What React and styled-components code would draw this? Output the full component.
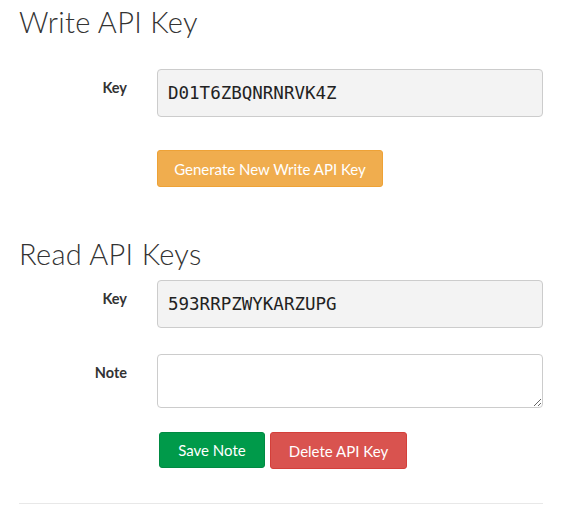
import React from 'react';
import styled, { createGlobalStyle } from 'styled-components';

const Global = createGlobalStyle`
  body {
    margin: 0;
    background: #fff;
    font-family: Lato, "Open Sans", sans-serif;
    color: #333;
  }
`;

const Page = styled.div`
  padding: 0 41px 0 19px;
  width: 525px;
`;

const Heading = styled.h2`
  font-family: Lato, sans-serif;
  font-weight: 300;
  font-size: 29px;
  line-height: 32px;
  margin: ${p => p.$top}px 0 ${p => p.$bottom}px 0;
  color: #333;
  letter-spacing: 0.3px;
`;

const Row = styled.div`
  display: grid;
  grid-template-columns: 108px 386px;
  column-gap: 30px;
  margin-bottom: ${p => p.$gap}px;
`;

const Label = styled.label`
  font-weight: 700;
  font-size: 14.5px;
  line-height: 20px;
  padding-top: 9px;
  text-align: right;
`;

const KeyField = styled.div`
  box-sizing: border-box;
  height: 48px;
  background: #f3f3f3;
  border: 1px solid #ccc;
  border-radius: 4px;
  padding: 0 10px;
  display: flex;
  align-items: center;
  font-family: "DejaVu Sans Mono", monospace;
  font-size: 17.5px;
  color: #222;
`;

const NoteArea = styled.textarea`
  box-sizing: border-box;
  display: block;
  height: 54px;
  width: 386px;
  margin: 0;
  border: 1px solid #ccc;
  border-radius: 4px;
  background: #fff;
  padding: 6px 10px;
  font-family: Lato, sans-serif;
  font-size: 14px;
`;

const Actions = styled.div`
  grid-column: 2;
  display: flex;
  gap: 5px;
  padding-left: ${p => p.$indent || 0}px;
  align-items: flex-start;
`;

const Button = styled.button`
  box-sizing: border-box;
  width: ${p => p.$w}px;
  height: ${p => p.$h || 37}px;
  border: 1px solid ${p => p.$border};
  background: ${p => p.$bg};
  color: #fff;
  border-radius: 3px;
  font-family: Lato, sans-serif;
  font-size: 15px;
  padding: 0;
  cursor: pointer;
`;

const Rule = styled.hr`
  border: 0;
  border-top: 1px solid #e8e8e8;
  margin: 34px 0 0 0;
  width: 524px;
`;

export default function App() {
  return (
    <Page>
      <Global />
      <Heading $top={6} $bottom={31}>Write API Key</Heading>
      <Row $gap={33}>
        <Label>Key</Label>
        <KeyField>D01T6ZBQNRNRVK4Z</KeyField>
      </Row>
      <Row $gap={0}>
        <Actions>
          <Button $w={226} $bg="#f0ad4e" $border="#eea236">Generate New Write API Key</Button>
        </Actions>
      </Row>
      <Heading $top={51} $bottom={10}>Read API Keys</Heading>
      <Row $gap={26}>
        <Label>Key</Label>
        <KeyField>593RRPZWYKARZUPG</KeyField>
      </Row>
      <Row $gap={24}>
        <Label>Note</Label>
        <NoteArea />
      </Row>
      <Row $gap={0}>
        <Actions $indent={2}>
          <Button $w={106} $h={36} $bg="#009a4a" $border="#008a42">Save Note</Button>
          <Button $w={137} $bg="#d9534f" $border="#d43f3a">Delete API Key</Button>
        </Actions>
      </Row>
      <Rule />
    </Page>
  );
}
